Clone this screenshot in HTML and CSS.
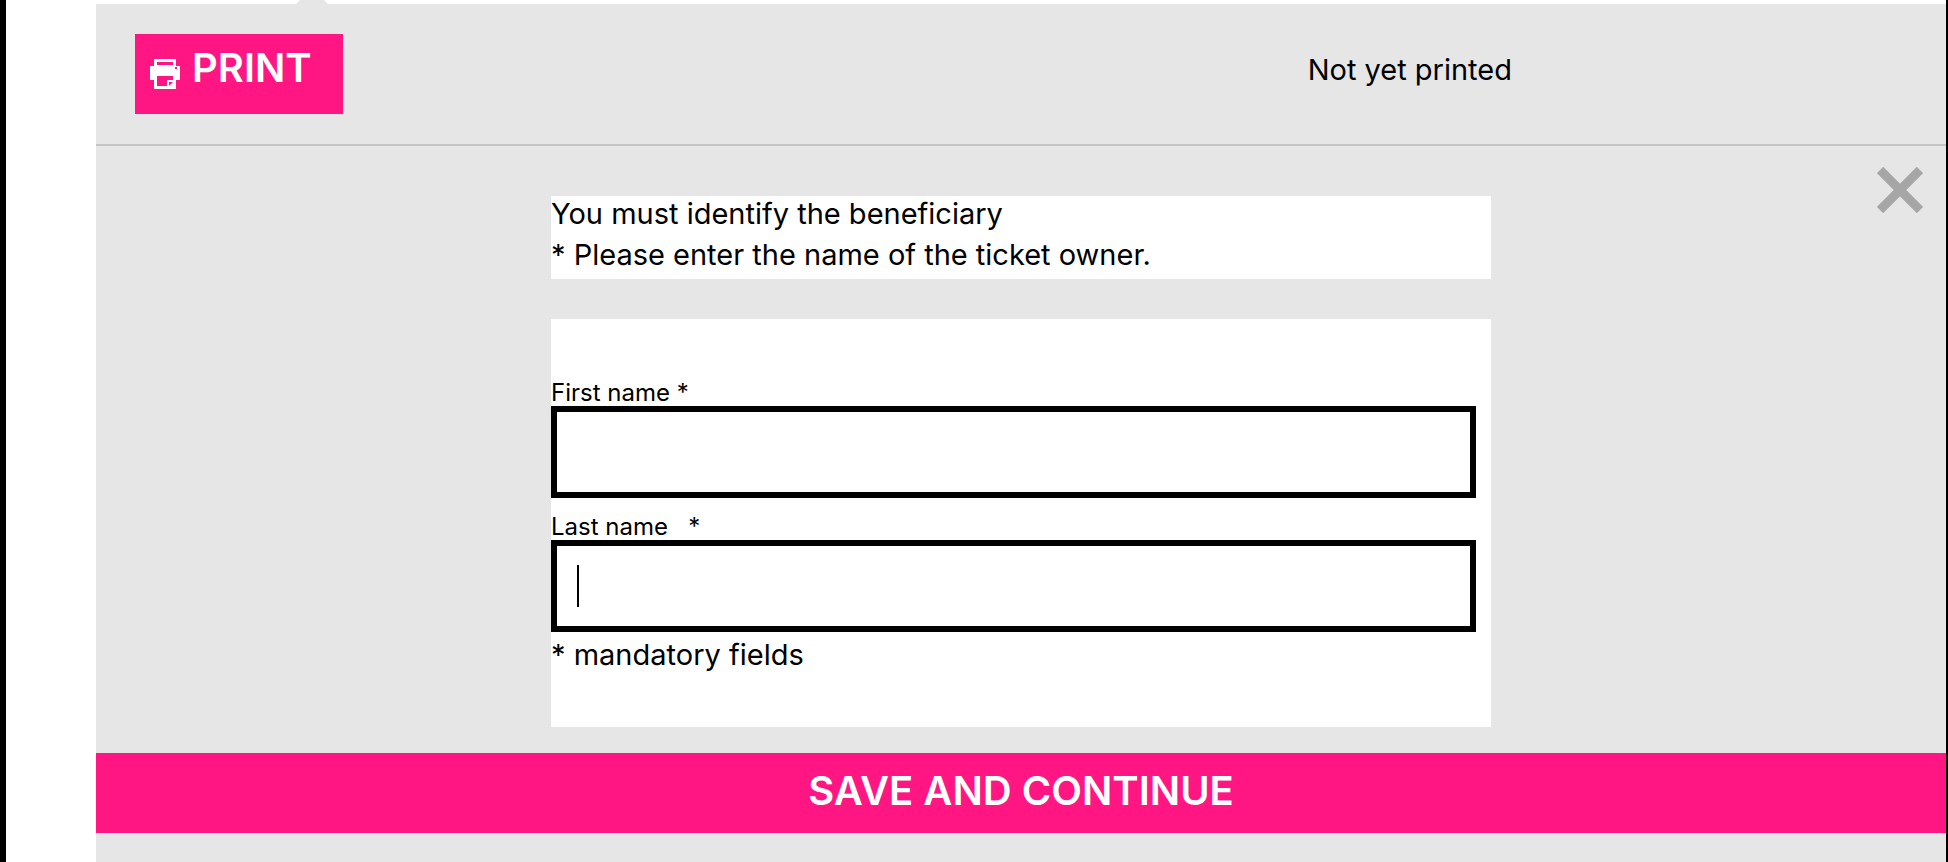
FILE: index.html
```html
<!DOCTYPE html>
<html lang="en">

<head>
<meta charset="utf-8">
<title>Print ticket</title>
<link rel="stylesheet" href="styles.css">
</head>

<body>
<main class="panel">
    <span class="arrow"></span>

    <header class="print-bar">
        <div>
            <button type="button" class="btn btn-print">
                <svg class="icon-print" viewBox="0 0 30 30" aria-hidden="true">
                    <path fill="#fff" fill-rule="evenodd" d="M4 0H26V7H30V21H26V30H4V21H0V7H4ZM7 3V6H23V3ZM7 17V27H17V21H23V17ZM19 23V27L23 23ZM25 8V10H27V8Z"/>
                </svg>
                <span class="btn-text">PRINT</span>
            </button>
        </div>
        <div class="status">Not yet printed</div>
    </header>

    <form class="owner">
        <button type="button" class="close" aria-label="Close">
            <svg viewBox="0 0 46 46" aria-hidden="true">
                <path d="M3 3L43 43M43 3L3 43" stroke="#a6a6a6" stroke-width="9"/>
            </svg>
        </button>

        <div class="notice">
            <p>You must identify the beneficiary</p>
            <p>* Please enter the name of the ticket owner.</p>
        </div>

        <div class="fields">
            <div class="field">
                <label for="first-name">First name *</label>
                <input type="text" id="first-name" name="first-name">
            </div>
            <div class="field">
                <label for="last-name">Last name &nbsp; *</label>
                <input type="text" id="last-name" name="last-name">
                <span class="caret"></span>
            </div>
            <p>* mandatory fields</p>
        </div>

        <button type="submit" class="btn btn-save">SAVE AND CONTINUE</button>
    </form>
</main>
</body>

</html>
```

FILE: styles.css
```css
* {
    box-sizing: border-box;
}

body {
    display: flex;
    min-height: 100vh;
    margin: 0;
    padding: 4px 0 0 90px;
    border-left: 6px solid #000;
    border-right: 2px solid #000;
    background-color: #fff;
    font-family: Inter, "Liberation Sans", sans-serif;
    font-size: 29px;
    line-height: 36px;
    color: #000;
}

p {
    margin: 0;
}

p + p,
.field + p {
    margin-top: 5px;
}

.panel {
    position: relative;
    flex: 1;
    background-color: #e6e6e6;
}

/* tip pointing at the tab above */
.arrow {
    position: absolute;
    top: -4px;
    left: 200px;
    width: 32px;
    height: 4px;
    background-color: #e6e6e6;
    clip-path: polygon(4px 0, 28px 0, 100% 100%, 0 100%);
}

.print-bar {
    display: grid;
    grid-template-columns: 2fr 1fr;
    padding: 30px 52px 30px 39px;
    border-bottom: 2px solid #c4c4c4;
}

.status {
    padding-top: 18px;
}

.btn {
    height: 80px;
    border: 0;
    background-color: #ff1683;
    font-family: inherit;
    font-size: 40px;
    font-weight: 600;
    color: #fff;
    cursor: pointer;
}

.btn-print {
    display: flex;
    align-items: center;
    gap: 12px;
    min-width: 208px;
    padding: 0 15px;
}

.btn-text {
    padding-bottom: 13px;
}

.icon-print {
    width: 30px;
    height: 30px;
}

.owner {
    position: relative;
    padding: 50px 0 29px;
}

.close {
    position: absolute;
    top: 21px;
    right: 23px;
    width: 46px;
    height: 46px;
    padding: 0;
    border: 0;
    background: none;
    cursor: pointer;
}

.close svg {
    display: block;
}

.notice,
.fields {
    max-width: 940px;
    margin: 0 auto;
    background-color: #fff;
}

.notice {
    margin-bottom: 40px;
    padding-bottom: 6px;
}

.fields {
    padding: 60px 15px 54px 0;
}

.field {
    position: relative;
}

.field + .field {
    margin-top: 15px;
}

.field label {
    display: block;
    font-size: 24px;
    line-height: 27px;
}

.field input {
    display: block;
    width: 100%;
    height: 92px;
    padding: 0 20px;
    border: 6px solid #000;
    border-radius: 0;
    background-color: #fff;
    font: inherit;
    outline: none;
}

.caret {
    position: absolute;
    bottom: 25px;
    left: 26px;
    width: 2px;
    height: 42px;
    background-color: #000;
}

.btn-save {
    display: block;
    width: 100%;
    margin-top: 26px;
    padding-bottom: 6px;
}
```
